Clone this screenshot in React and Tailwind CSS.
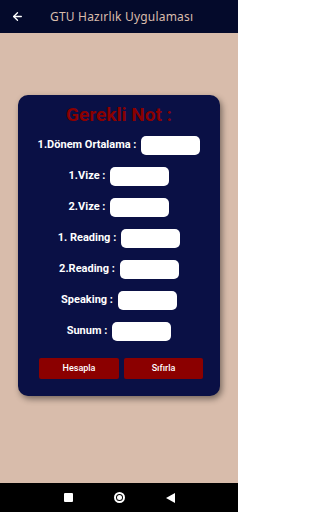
import { ArrowLeft } from "lucide-react";

const rows = ["1.Dönem Ortalama :", "1.Vize :", "2.Vize :", "1. Reading :", "2.Reading :", "Speaking :", "Sunum :"];

export default function App() {
  return (
    <div className="w-[238px] h-[512px] flex flex-col bg-[#d8bcab] font-['Roboto',sans-serif] overflow-hidden">
      <header className="h-[33px] bg-[#040a2b] flex items-center shrink-0">
        <ArrowLeft className="ml-[11px] text-white" size={13} strokeWidth={2.5} />
        <p className="ml-[26px] text-[12px] tracking-[0.2px] text-[#d9bcab] font-['Noto_Sans',sans-serif]">GTU Hazırlık Uygulaması</p>
      </header>

      <main className="flex-1 flex flex-col">
        <section className="mt-[62px] ml-[18px] w-[202px] h-[301px] bg-[#0a1045] rounded-[10px] shadow-[2px_3px_6px_rgba(0,0,0,0.45)] flex flex-col items-center">
          <h1 className="mt-[8px] text-[19px] font-bold text-[#8b0000] leading-[24px]">Gerekli Not :</h1>
          <div className="mt-[9px] flex flex-col gap-[12px]">
            {rows.map((r) => (
              <div key={r} className="flex items-center justify-center gap-[5px]">
                <span className="text-[11px] font-bold text-white">{r}</span>
                <div className="w-[59px] h-[19px] bg-white rounded-[5px]" />
              </div>
            ))}
          </div>
          <div className="mt-[17px] ml-[4px] flex gap-[5px]">
            <button className="w-[80px] h-[21px] bg-[#8b0000] rounded-[2px] text-[9px] text-white font-medium">Hesapla</button>
            <button className="w-[79px] h-[21px] bg-[#8b0000] rounded-[2px] text-[9px] text-white font-medium">Sıfırla</button>
          </div>
        </section>
      </main>

      <nav className="h-[29px] bg-black flex items-center justify-center gap-[41px] shrink-0">
        <div className="w-[9px] h-[9px] bg-white rounded-[1px]" />
        <div className="w-[11px] h-[11px] rounded-full border-[2px] border-white flex items-center justify-center">
          <div className="w-[5px] h-[5px] bg-white rounded-full" />
        </div>
        <svg width="9" height="10" viewBox="0 0 9 10">
          <polygon points="9,0 9,10 0,5" fill="white" />
        </svg>
      </nav>
    </div>
  );
}
